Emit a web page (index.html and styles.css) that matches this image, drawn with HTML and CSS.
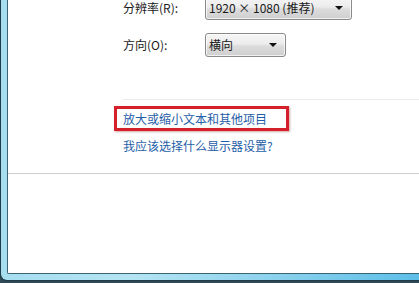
FILE: index.html
```html
<!DOCTYPE html>
<html lang="zh-CN">
<head>
<meta charset="utf-8">
<title>屏幕分辨率</title>
<link rel="stylesheet" href="styles.css">
</head>
<body>
<div class="screen">
  <div class="frame">
    <div class="content">
      <div class="form">
        <div class="row">
          <span class="label">分辨率(R):</span>
          <div class="combo combo-wide"><span class="combo-text">1920 × 1080 (推荐)</span><span class="arrow"></span></div>
        </div>
        <div class="row row-second">
          <span class="label">方向(O):</span>
          <div class="combo combo-narrow"><span class="combo-text">横向</span><span class="arrow"></span></div>
        </div>
        <div class="faint-line"></div>
        <div class="highlight"><a class="link">放大或缩小文本和其他项目</a></div>
        <a class="link link-second">我应该选择什么显示器设置?</a>
      </div>
      <div class="separator"></div>
    </div>
  </div>
</div>
</body>
</html>
```
FILE: styles.css
```css
html, body {
  margin: 0;
  padding: 0;
}
body {
  background: #3a5661;
  font-family: "Noto Sans CJK SC", "Noto Sans", sans-serif;
  font-size: 12px;
}
.screen {
  width: 419px;
  height: 283px;
  overflow: hidden;
  background: #2f4a55;
}
.frame {
  width: 430px;
  height: 274px;
  border-left: 1px solid #1d3b48;
  border-bottom: 1px solid #1d3b48;
  border-bottom-left-radius: 7px;
  padding: 0 0 6px 6px;
  background: linear-gradient(90deg, #a6def0 0%, #b4e4f3 30%, #8fd3ee 60%, #57bce8 100%);
}
.content {
  height: 273px;
  background: #ffffff;
  border-left: 1px solid #3b6575;
  border-bottom: 1px solid #3b6575;
  border-bottom-left-radius: 2px;
  overflow: hidden;
}
.form {
  margin-top: -4px;
  padding-left: 115px;
}
.row {
  display: flex;
  align-items: center;
  height: 24px;
}
.row-second {
  margin-top: 13px;
}
.label {
  width: 82px;
  color: #1a1a1a;
  line-height: 16px;
}
.combo {
  box-sizing: border-box;
  height: 24px;
  border: 1px solid #8a8a8a;
  border-radius: 3px;
  background: linear-gradient(#f6f6f6 0%, #ececec 45%, #dcdcdc 55%, #cfcfcf 100%);
  display: flex;
  align-items: center;
  padding: 0 8px 0 3px;
  box-shadow: inset 0 0 0 1px rgba(255,255,255,0.7);
}
.combo-wide {
  width: 147px;
}
.combo-narrow {
  width: 81px;
}
.combo-text {
  flex: 1;
  color: #1a1a1a;
  line-height: 16px;
  white-space: nowrap;
}
.arrow {
  width: 0;
  height: 0;
  border-left: 4px solid transparent;
  border-right: 4px solid transparent;
  border-top: 4px solid #111111;
}
.faint-line {
  margin-top: 42px;
  height: 1px;
  background: #ececec;
}
.highlight {
  margin-top: 6px;
  margin-left: -9px;
  box-sizing: border-box;
  width: 175px;
  height: 25px;
  border: 3px solid #d4202a;
  padding-left: 6px;
  display: flex;
  align-items: center;
  box-shadow: 1px 1px 2px rgba(120, 0, 0, 0.35);
}
.link {
  color: #1f5ea8;
  line-height: 16px;
  white-space: nowrap;
  display: block;
}
.link-second {
  margin-top: 7px;
}
.separator {
  margin-top: 19px;
  height: 1px;
  background: #cfcfcf;
}
```
